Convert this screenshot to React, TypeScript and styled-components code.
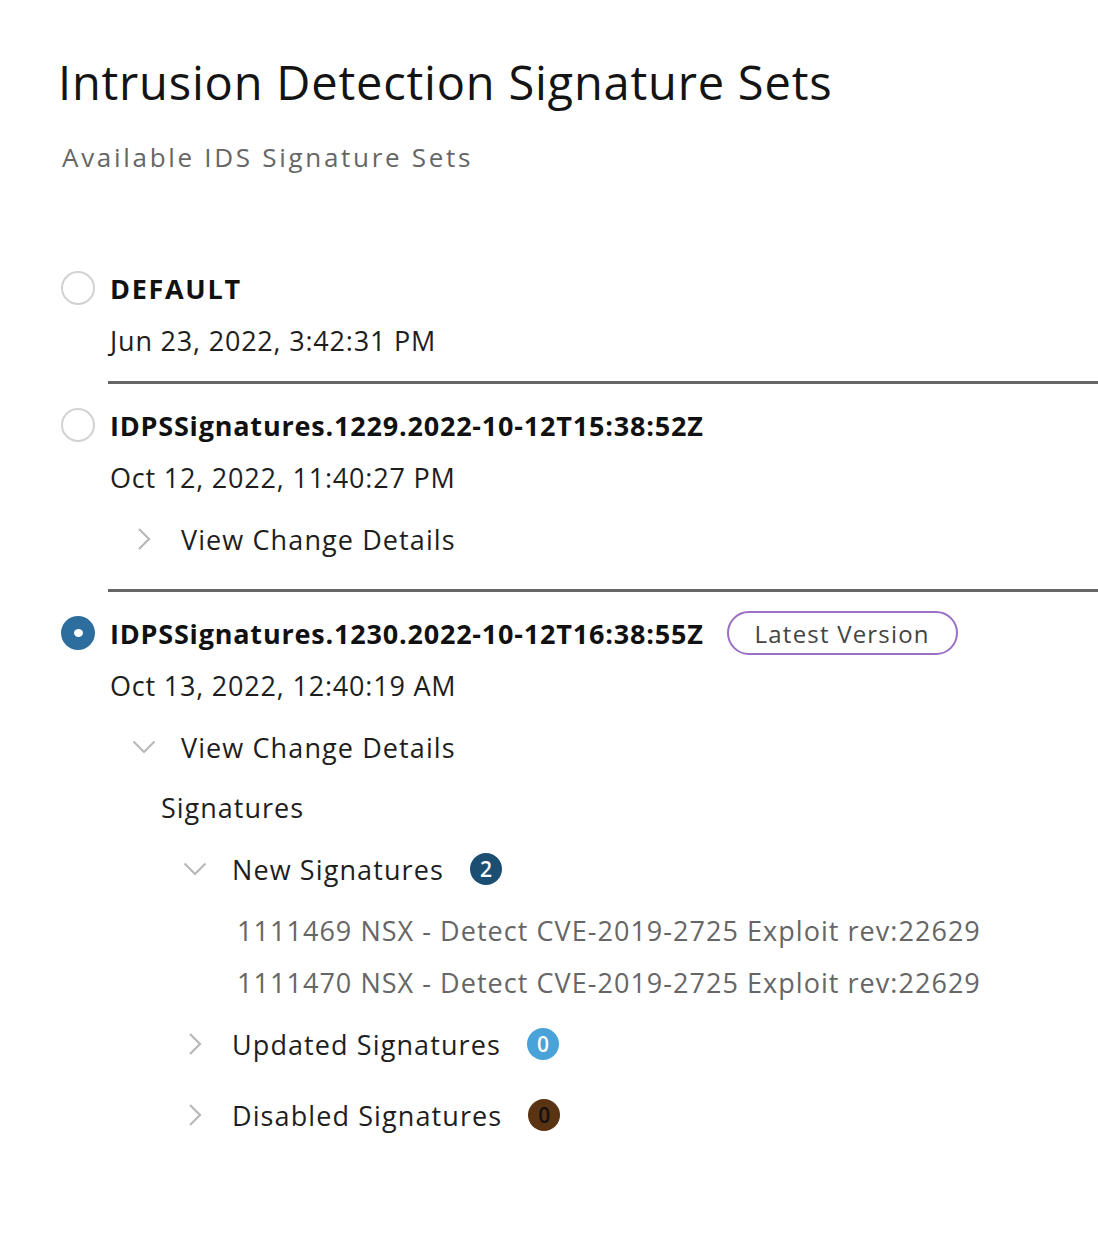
import React from "react";
import styled, { createGlobalStyle } from "styled-components";

const Global = createGlobalStyle`
  html, body { margin: 0; padding: 0; background: #fff; }
  body { font-family: "Open Sans", "Liberation Sans", sans-serif; color: #1b1b1b; }
`;

const Page = styled.div`
  padding: 52px 0 0 60px;
  overflow: hidden;
  min-height: 1238px;
  box-sizing: border-box;
`;

const Title = styled.h1`
  margin: 0 0 0 -2px;
  font-size: 47px;
  font-weight: 400;
  line-height: 60px;
  color: #141414;
  letter-spacing: 0.8px;
`;

const Subtitle = styled.div`
  margin: 28px 0 0 2px;
  font-size: 26px;
  line-height: 34px;
  color: #666;
  letter-spacing: 2.7px;
`;

const SetList = styled.div`
  margin-top: 88px;
  display: flex;
  flex-direction: column;
`;

const Divider = styled.div`
  margin-left: 48px;
  height: 3px;
  background: #666;
`;

const Item = styled.div<{ $first?: boolean }>`
  display: grid;
  grid-template-columns: 50px 1fr;
  padding: ${(p) => (p.$first ? "0" : "15px")} 0 15px 0;
`;

const RadioCell = styled.div`
  height: 52px;
  display: flex;
  align-items: center;
`;

const Radio = styled.span<{ $checked?: boolean }>`
  width: 34px;
  height: 34px;
  box-sizing: border-box;
  border-radius: 50%;
  margin-left: 1px;
  display: flex;
  align-items: center;
  justify-content: center;
  background: ${(p) => (p.$checked ? "#2d6e9f" : "#fff")};
  border: ${(p) => (p.$checked ? "none" : "2px solid #d2d2d2")};
  &::after {
    content: "";
    display: ${(p) => (p.$checked ? "block" : "none")};
    width: 9px;
    height: 8px;
    border-radius: 50%;
    background: #fff;
  }
`;

const Body = styled.div`
  display: flex;
  flex-direction: column;
`;

const Header = styled.div`
  height: 52px;
  display: flex;
  align-items: center;
  gap: 23px;
`;

const Name = styled.span<{ $spacing?: number }>`
  font-size: 27px;
  font-weight: 700;
  color: #111;
  letter-spacing: ${(p) => p.$spacing ?? 0.8}px;
`;

const Pill = styled.span`
  height: 44px;
  box-sizing: border-box;
  padding: 0 26px;
  border: 2px solid #9a6fc4;
  border-radius: 22px;
  display: inline-flex;
  align-items: center;
  font-size: 24px;
  color: #444;
  letter-spacing: 1.2px;
`;

const DateLine = styled.div`
  height: 52px;
  display: flex;
  align-items: center;
  font-size: 27px;
  color: #1e1e1e;
  letter-spacing: 0.8px;
`;

const Node = styled.div<{ $open?: boolean }>`
  margin-top: 10px;
  padding-bottom: ${(p) => (p.$open ? "0" : "9px")};
  display: flex;
  flex-direction: column;
`;

const ToggleRow = styled.div`
  height: 52px;
  display: flex;
  align-items: center;
  padding-left: 22px;
`;

const ChevronBox = styled.span`
  width: 24px;
  height: 24px;
  display: flex;
  align-items: center;
  justify-content: center;
  margin-right: 25px;
`;

const ToggleLabel = styled.span`
  font-size: 27px;
  color: #1e1e1e;
  letter-spacing: 1.1px;
`;

const Badge = styled.span<{ $bg: string; $fg: string }>`
  margin-left: 26px;
  width: 32px;
  height: 32px;
  border-radius: 50%;
  background: ${(p) => p.$bg};
  color: ${(p) => p.$fg};
  font-size: 21px;
  font-weight: 600;
  display: inline-flex;
  align-items: center;
  justify-content: center;
`;

const NodeBody = styled.div`
  padding-left: 51px;
  padding-top: 8px;
  display: flex;
  flex-direction: column;
`;

const SectionLabel = styled.div`
  height: 52px;
  display: flex;
  align-items: center;
  font-size: 27px;
  color: #1e1e1e;
  letter-spacing: 1px;
`;

const LeafList = styled.div`
  padding: 9px 0 0 76px;
  display: flex;
  flex-direction: column;
`;

const Leaf = styled.div`
  height: 52px;
  display: flex;
  align-items: center;
  font-size: 27px;
  color: #666;
  letter-spacing: 1.04px;
`;

const Chevron = ({ open }: { open?: boolean }) =>
  open ? (
    <svg width="24" height="14" viewBox="0 0 24 14">
      <path d="M1.5 1.5 L12 12 L22.5 1.5" fill="none" stroke="#b8b8b8" strokeWidth="2.2" />
    </svg>
  ) : (
    <svg width="14" height="24" viewBox="0 0 14 24">
      <path d="M2 2 L12 12 L2 22" fill="none" stroke="#b8b8b8" strokeWidth="2.2" />
    </svg>
  );

const Toggle = ({
  open,
  label,
  badge,
  children,
}: {
  open?: boolean;
  label: string;
  badge?: React.ReactNode;
  children?: React.ReactNode;
}) => (
  <Node $open={open}>
    <ToggleRow>
      <ChevronBox>
        <Chevron open={open} />
      </ChevronBox>
      <ToggleLabel>{label}</ToggleLabel>
      {badge}
    </ToggleRow>
    {open && children}
  </Node>
);

export default function App() {
  return (
    <>
      <Global />
      <Page>
        <Title>Intrusion Detection Signature Sets</Title>
        <Subtitle>Available IDS Signature Sets</Subtitle>
        <SetList>
          <Item $first>
            <RadioCell>
              <Radio />
            </RadioCell>
            <Body>
              <Header>
                <Name $spacing={1.7}>DEFAULT</Name>
              </Header>
              <DateLine>Jun 23, 2022, 3:42:31 PM</DateLine>
            </Body>
          </Item>
          <Divider />
          <Item>
            <RadioCell>
              <Radio />
            </RadioCell>
            <Body>
              <Header>
                <Name>IDPSSignatures.1229.2022-10-12T15:38:52Z</Name>
              </Header>
              <DateLine>Oct 12, 2022, 11:40:27 PM</DateLine>
              <Toggle label="View Change Details" />
            </Body>
          </Item>
          <Divider />
          <Item>
            <RadioCell>
              <Radio $checked />
            </RadioCell>
            <Body>
              <Header>
                <Name>IDPSSignatures.1230.2022-10-12T16:38:55Z</Name>
                <Pill>Latest Version</Pill>
              </Header>
              <DateLine>Oct 13, 2022, 12:40:19 AM</DateLine>
              <Toggle open label="View Change Details">
                <NodeBody>
                  <SectionLabel>Signatures</SectionLabel>
                  <Toggle
                    open
                    label="New Signatures"
                    badge={<Badge $bg="#1c4e72" $fg="#fff">2</Badge>}
                  >
                    <LeafList>
                      <Leaf>1111469 NSX - Detect CVE-2019-2725 Exploit rev:22629</Leaf>
                      <Leaf>1111470 NSX - Detect CVE-2019-2725 Exploit rev:22629</Leaf>
                    </LeafList>
                  </Toggle>
                  <Toggle
                    label="Updated Signatures"
                    badge={<Badge $bg="#49a3d9" $fg="#fff">0</Badge>}
                  />
                  <Toggle
                    label="Disabled Signatures"
                    badge={<Badge $bg="#5a3312" $fg="#111">0</Badge>}
                  />
                </NodeBody>
              </Toggle>
            </Body>
          </Item>
        </SetList>
      </Page>
    </>
  );
}
